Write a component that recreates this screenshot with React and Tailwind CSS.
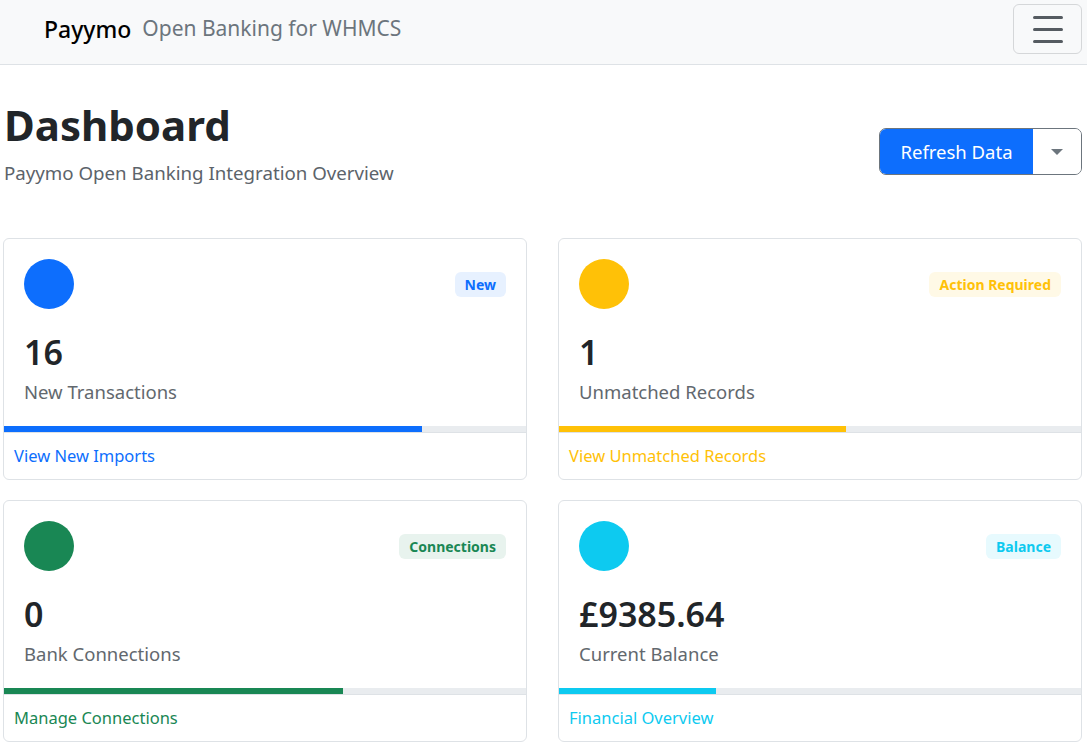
import { useState } from "react";

const CARDS = [
  {
    value: "16",
    label: "New Transactions",
    badge: "New",
    link: "View New Imports",
    pct: 80,
    dot: "bg-[#0d6efd]",
    badgeCls: "bg-[#e7f1ff] text-[#0d6efd]",
    linkCls: "text-[#0d6efd]",
  },
  {
    value: "1",
    label: "Unmatched Records",
    badge: "Action Required",
    link: "View Unmatched Records",
    pct: 55,
    dot: "bg-[#ffc107]",
    badgeCls: "bg-[#fff9e6] text-[#ffc107]",
    linkCls: "text-[#ffc107]",
  },
  {
    value: "0",
    label: "Bank Connections",
    badge: "Connections",
    link: "Manage Connections",
    pct: 65,
    dot: "bg-[#198754]",
    badgeCls: "bg-[#e8f3ee] text-[#198754]",
    linkCls: "text-[#198754]",
  },
  {
    value: "£9385.64",
    label: "Current Balance",
    badge: "Balance",
    link: "Financial Overview",
    pct: 30,
    dot: "bg-[#0dcaf0]",
    badgeCls: "bg-[#e7fafe] text-[#0dcaf0]",
    linkCls: "text-[#0dcaf0]",
  },
];

function StatCard({ card }) {
  return (
    <div className="flex flex-col rounded-[6px] border border-[#dee2e6] bg-white overflow-hidden">
      <div className="px-5 pt-5 pb-5">
        <div className="flex items-start justify-between">
          <div className={`h-[50px] w-[50px] rounded-full ${card.dot}`} />
          <span
            className={`mt-[13px] rounded-[6px] px-[10px] py-[3px] text-[14px] font-bold leading-[19px] ${card.badgeCls}`}
          >
            {card.badge}
          </span>
        </div>
        <div className="mt-[23px] text-[34px] font-semibold leading-[40px] text-[#212529]">
          {card.value}
        </div>
        <div className="mt-[6px] text-[18.5px] leading-[28px] text-[#62686e]">{card.label}</div>
      </div>
      <div className="h-[6px] w-full bg-[#e9ecef]">
        <div className={`h-full ${card.dot}`} style={{ width: `${card.pct}%` }} />
      </div>
      <div className="border-t border-[#dee2e6] px-[10px] py-[11px]">
        <a href="#" className={`text-[16.5px] leading-[24px] ${card.linkCls}`}>
          {card.link}
        </a>
      </div>
    </div>
  );
}

export default function App() {
  const [open, setOpen] = useState(false);

  return (
    <div className="min-h-screen bg-white font-['Noto_Sans',sans-serif] text-[#212529]">
      <nav className="h-[65px] border-b border-[#dee2e6] bg-[#f8f9fa]">
        <div className="flex items-start justify-between pt-[4px] pl-[44px] pr-[5px]">
          <div className="flex h-[50px] items-center gap-[11px]">
            <span className="text-[23px] font-medium text-black">Payymo</span>
            <span className="text-[21px] text-[#6c757d]">Open Banking for WHMCS</span>
          </div>
          <button
            onClick={() => setOpen(!open)}
            className="flex h-[50px] w-[69px] flex-col items-center justify-center gap-[9px] rounded-[6px] border border-[#d5d7d9]"
          >
            <span className="block h-[3px] w-[30px] rounded bg-[#555b61]" />
            <span className="block h-[3px] w-[30px] rounded bg-[#555b61]" />
            <span className="block h-[3px] w-[30px] rounded bg-[#555b61]" />
          </button>
        </div>
      </nav>

      <main className="px-[3px]">
        <div className="flex items-center justify-between pt-[36px] pb-[51px] pr-[2px]">
          <div className="pl-[1px]">
            <h1 className="text-[42px] font-bold leading-[48px]">Dashboard</h1>
            <p className="mt-[10px] text-[18.7px] leading-[28px] text-[#5c636a]">
              Payymo Open Banking Integration Overview
            </p>
          </div>
          <div className="mt-[15px] flex h-[47px] overflow-hidden rounded-[7px] border border-[#6c757d]">
            <button className="w-[153px] bg-[#0d6efd] text-[18.5px] text-white">Refresh Data</button>
            <button className="flex w-[48px] items-center justify-center bg-white">
              <span className="block h-0 w-0 border-x-[6px] border-t-[6px] border-x-transparent border-t-[#6c757d]" />
            </button>
          </div>
        </div>

        <div className="grid grid-cols-2 gap-x-[31px] gap-y-[20px] pr-[2px]">
          {CARDS.map((c) => (
            <StatCard key={c.label} card={c} />
          ))}
        </div>
      </main>
    </div>
  );
}
